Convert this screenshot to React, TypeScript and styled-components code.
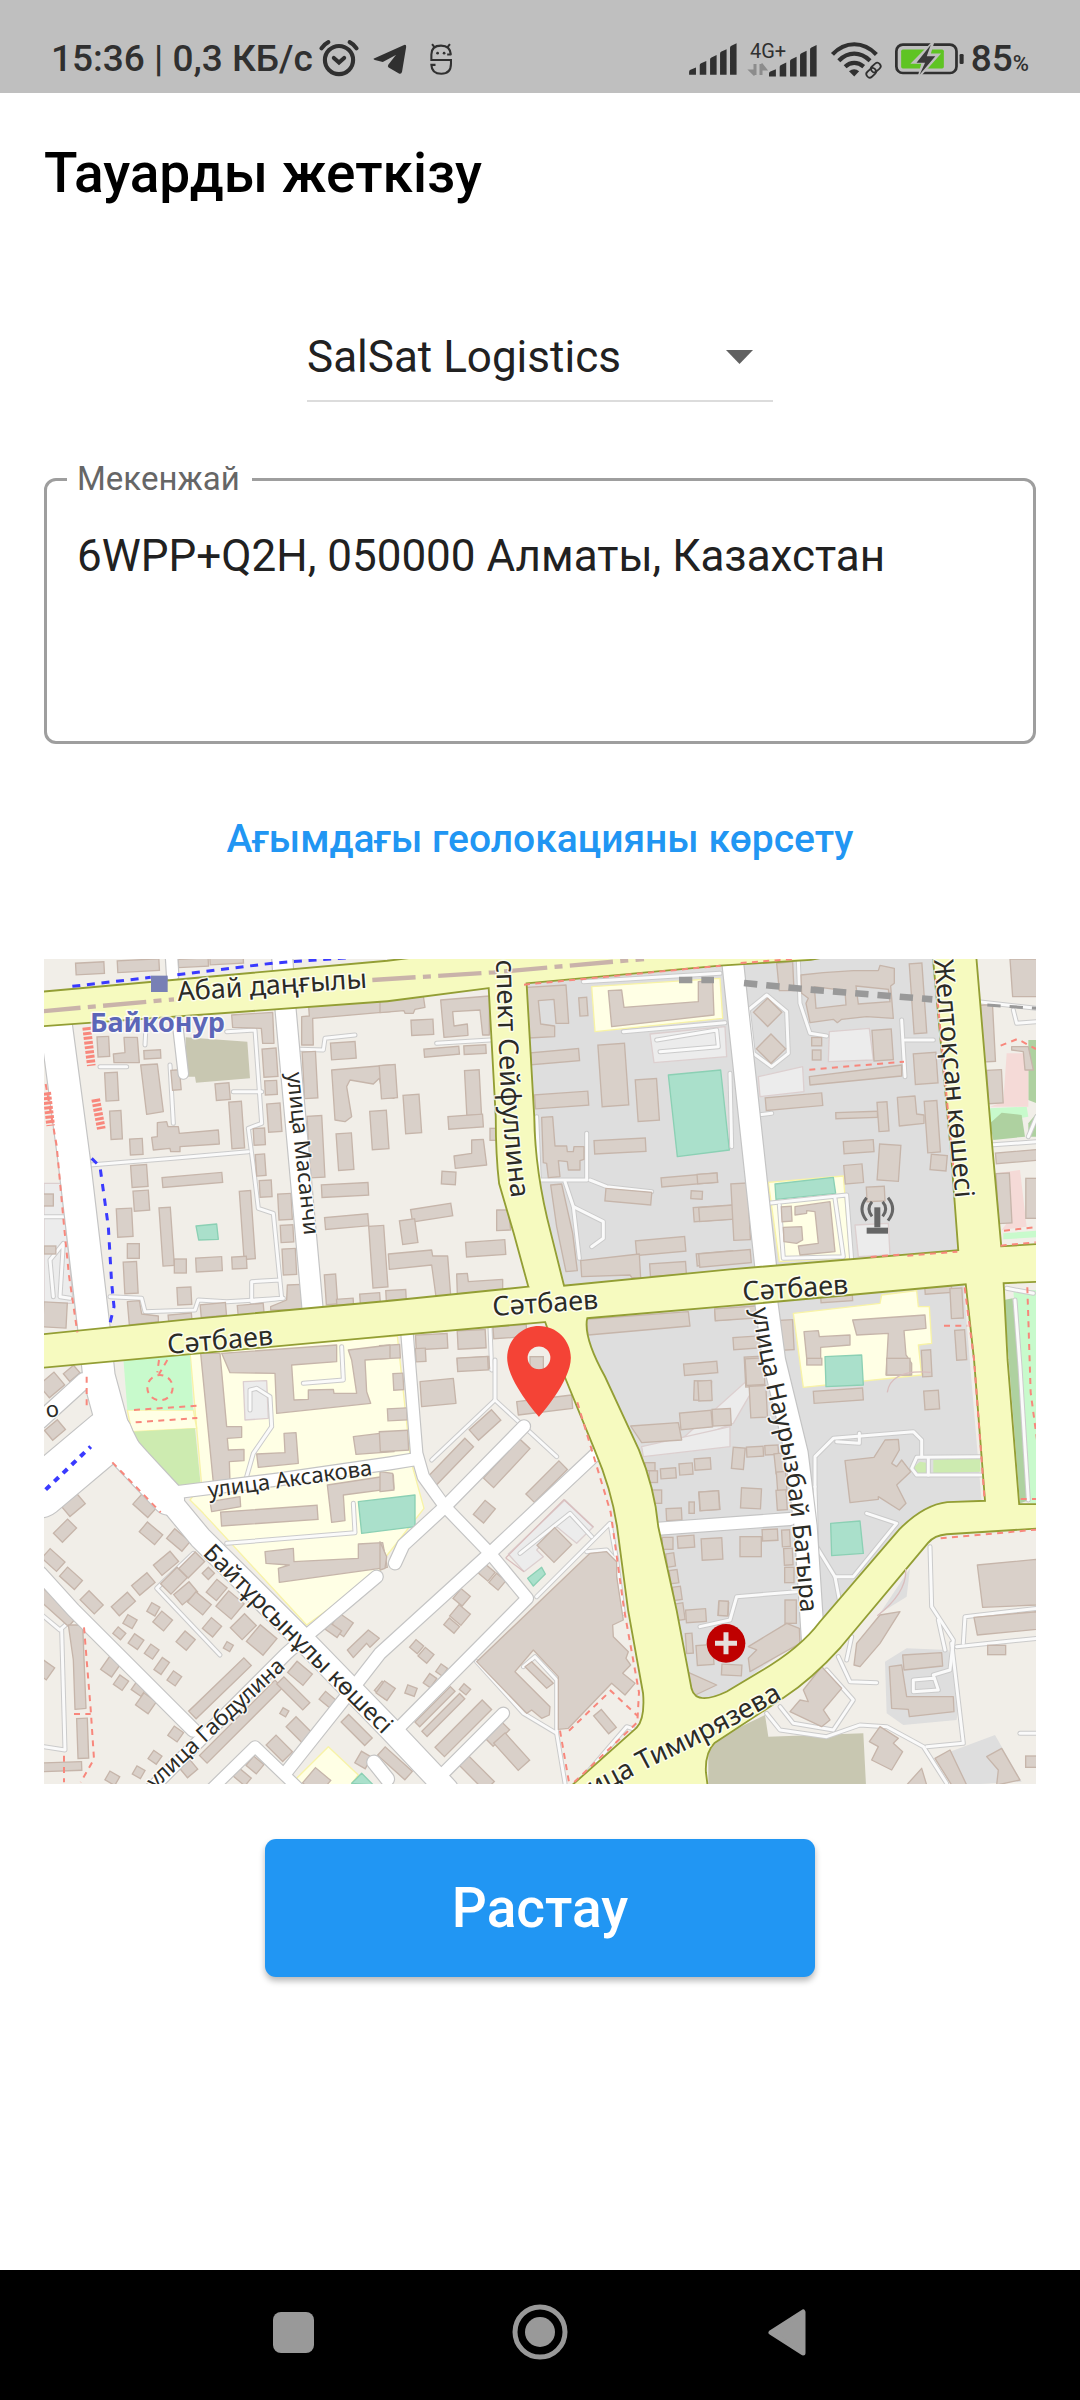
import React from "react";
import styled, { createGlobalStyle } from "styled-components";

const GlobalStyle = createGlobalStyle`
  *, *::before, *::after { box-sizing: border-box; }
  body { margin: 0; background: #fff; font-family: Roboto, "Noto Sans", sans-serif; color: #212121; }
  button, select, textarea { font: inherit; color: inherit; }
`;

const Screen = styled.div`
  display: flex;
  flex-direction: column;
  min-height: 100vh;
`;

const StatusBar = styled.header`
  display: flex;
  justify-content: space-between;
  height: 93px;
  padding: 24px 51px 0;
  background: #bfbfbf;
  color: #303030;
`;

const StatusGroup = styled.div<{ $gap: number }>`
  display: flex;
  align-items: center;
  gap: ${(p) => p.$gap}px;
  svg { display: block; flex: none; overflow: visible; }
`;

const StatusText = styled.span`
  font-size: 37px;
  line-height: 44px;
  font-weight: 500;
  white-space: pre;
`;

const Percent = styled.small`
  font-size: 22px;
  line-height: 22px;
  font-weight: 500;
`;

const Page = styled.main`
  flex: 1;
  display: flex;
  flex-direction: column;
  align-items: center;
  padding: 48px 44px 0;
`;

const Title = styled.h1`
  align-self: stretch;
  margin: 0 0 108px;
  font-size: 55px;
  line-height: 64px;
  font-weight: 500;
  color: #000;
`;

const SelectBox = styled.div`
  display: flex;
  align-items: center;
  width: 466px;
  max-width: 100%;
  height: 89px;
  margin-bottom: 57px;
  padding-right: 20px;
  border-bottom: 2px solid #dcdcdc;
  svg { flex: none; pointer-events: none; }
`;

const Select = styled.select`
  flex: 1;
  height: 87px;
  padding: 0;
  border: 0;
  background: none;
  appearance: none;
  font-size: 44px;
`;

const Field = styled.fieldset`
  align-self: stretch;
  min-width: 0;
  margin: 0 0 47px;
  padding: 31px 30px 55px;
  border: 3px solid #9e9e9e;
  border-radius: 12px;
`;

const Legend = styled.legend`
  margin-left: -10px;
  padding: 0 12px 0 10px;
  font-size: 33px;
  line-height: 40px;
  color: #666;
`;

const Address = styled.textarea`
  display: block;
  width: 100%;
  padding: 0;
  border: 0;
  outline: 0;
  resize: none;
  background: none;
  font-size: 44px;
  line-height: 52px;
`;

const TextButton = styled.button`
  height: 96px;
  margin-bottom: 72px;
  padding: 0 22px;
  border: 0;
  background: none;
  color: #2196f3;
  font-size: 39px;
  font-weight: 500;
`;

const MapFrame = styled.svg`
  display: block;
  width: 100%;
  height: auto;
  margin-bottom: 55px;
`;

const Confirm = styled.button`
  width: 550px;
  max-width: 100%;
  height: 138px;
  border: 0;
  border-radius: 11px;
  background: #2196f3;
  color: #fff;
  font-size: 55px;
  font-weight: 500;
  box-shadow: 0 4px 6px rgba(0, 0, 0, 0.28);
`;

const NavBar = styled.nav`
  display: flex;
  justify-content: space-around;
  align-items: center;
  height: 130px;
  padding: 0 170px 6px;
  background: #000;
`;

const NavButton = styled.button`
  display: grid;
  place-items: center;
  width: 96px;
  height: 96px;
  padding: 0;
  border: 0;
  background: none;
`;

const Label = styled.text<{ $size: number }>`
  font-family: "Noto Sans", "Open Sans", sans-serif;
  font-size: ${(p) => p.$size}px;
  fill: #2b2b26;
  stroke: rgba(255, 255, 255, 0.75);
  stroke-width: 3px;
  stroke-linejoin: round;
  paint-order: stroke;
`;

const StationLabel = styled(Label)`
  font-weight: 700;
  fill: #5c66b8;
`;

/* ---------- status icons ---------- */

const Bars = () => (
  <path
    fill="#303030"
    d="M0 91v-8q0-4 4-6l16-7v21zM31 91V64q0-4 4-6l15-7v40zM61 91V47q0-4 4-6l15-7v57zM90 91V30q0-4 4-6l15-7v74zM119 91V13q0-4 4-6l15-7v91z"
  />
);

const AlarmIcon = () => (
  <svg width="44" height="40" viewBox="913 114 128 116" fill="none" stroke="#303030" strokeWidth="12" strokeLinecap="round" aria-hidden="true">
    <circle cx="977" cy="175" r="41" />
    <path d="M962 169l15 13 15-13" />
    <path d="M926 141q8-12 20-18M1028 141q-8-12-20-18" />
  </svg>
);

const PlaneIcon = () => (
  <svg width="44" height="40" viewBox="1063 116 128 116" fill="#303030" aria-hidden="true">
    <path d="M1082 172l86-39q7-2 6 6l-12 72q-2 8-9 5l-30-17q-4-4-1-8l22-29-38 21-23-6q-7-3-1-5z" />
  </svg>
);

const FaceIcon = () => (
  <svg width="44" height="40" viewBox="1208 112 128 116" fill="none" stroke="#303030" strokeWidth="6" aria-hidden="true">
    <path d="M1302 157h-12M1301 158q-2-27-29-27-28 0-28 26v16h57v11q0 29-28 29t-29-26h12M1246 127l8 10M1298 127l-8 10" />
    <g fill="#303030" stroke="none"><circle cx="1262" cy="153" r="4" /><circle cx="1281" cy="153" r="4" /></g>
  </svg>
);

const SignalIcon = () => (
  <svg width="48" height="32" viewBox="0 -1 139 93" aria-hidden="true"><Bars /></svg>
);

const MobileIcon = () => (
  <svg width="67" height="40" viewBox="0 -4 67 40" role="img" aria-label="4G+">
    <text x="0" y="15" fontSize="20" fill="#303030" fontFamily="Roboto, sans-serif">4G+</text>
    <path d="M5 21v11M5 32l-4-4h4M11 32V21M11 21l4 5h-4" stroke="#8c8c8c" strokeWidth="3" fill="none" />
    <g transform="translate(19 2) scale(.345)"><Bars /></g>
  </svg>
);

const WifiIcon = () => (
  <svg width="52" height="38" viewBox="842 117 148 108" fill="none" stroke="#303030" strokeWidth="12" aria-hidden="true">
    <path d="M849 158q27-29 62-29t63 29M867 176q20-20 44-20t45 20M885 193q12-11 26-11t27 11" />
    <path d="M896 206q15-11 29 0l-14 15z" fill="#303030" stroke="none" />
    <g strokeWidth="5">
      <rect x="957" y="186" width="30" height="19" rx="9" transform="rotate(-42 972 195)" />
      <rect x="944" y="201" width="30" height="19" rx="9" transform="rotate(-42 959 210)" />
    </g>
  </svg>
);

const BatteryIcon = () => (
  <svg width="69" height="32" viewBox="1033 125 202 92" aria-hidden="true">
    <rect x="1037" y="129" width="176" height="83" rx="19" fill="none" stroke="#303030" strokeWidth="8" />
    <rect x="1222" y="156" width="12" height="30" rx="4" fill="#303030" />
    <rect x="1051" y="143" width="125" height="56" rx="5" fill="#5fc423" />
    <path d="M1140 122l-62 63h32l-10 35h10l58-65h-30l10-33z" fill="#bfbfbf" />
    <path d="M1138 129l-42 53h25l-16 35 46-54h-25z" fill="#3a3a3a" />
  </svg>
);

/* ---------- map ---------- */

type Sheet = {
  at: [number, number];
  grey?: string[];
  light?: string[];
  yellow?: string[];
  mint?: string[];
  park?: string[];
  wood?: string[];
  pink?: string[];
  olive?: string[];
  paths: string[];
  blocks: string;
  shapes: string[];
  teal?: string[];
};

/* Six survey sheets; each keeps its own origin. Blocks are "cx,cy,w,h,angle". */
const sheets: Sheet[] = [
  {
    at: [-12, -27],
    light: ["12,700 65,700 85,900 100,1060 12,1060"],
    olive: ["437,262 622,275 630,385 468,398 465,380 437,380"],
    teal: ["468,828 530,822 535,868 476,870"],
    paths: [
      "180,350 260,350", "390,345 400,520", "580,425 665,425", "780,298 850,300 855,265 945,255", "150,645 400,625 625,605",
      "560,245 645,240 665,520 625,535 640,650 655,775 700,790 725,1045 635,1055 635,995 720,990",
      "210,1040 305,1045 315,1085 465,1080 475,1050 560,1055 730,1045", "40,1040 30,930 70,880 60,1040 90,1045", "320,190 315,285", "12,800 80,800",
    ],
    blocks:
      "150,55,85,35,-3;295,47,125,35,-3;460,38,90,25,-3;560,32,100,20,-3;190,290,35,60,-3;337,313,50,25,-3;215,410,38,85,-3;408,390,26,60,-5;228,525,34,85,-3;289,590,38,48,-3;548,425,42,50,-5;590,525,38,140,-4;690,338,42,85,-4;693,413,36,42,-3;703,503,40,85,-4;658,560,34,50,-3;662,645,28,65,-4;677,716,36,50,-3;298,678,48,66,-4;304,752,46,60,-4;457,690,180,30,-5;380,860,34,175,-4;622,825,34,205,-4;254,818,46,85,-3;280,903,36,44,0;272,983,40,95,-3;421,948,36,42,0;507,943,78,42,-3;598,938,44,36,-3;735,770,40,78,-3;741,851,38,52,-3;748,935,40,78,-3;433,1038,42,52,-3;420,1102,70,20,-5;520,1080,76,38,-5;632,1078,78,30,-5;810,375,40,140,-3;828,590,44,185,-3;910,302,74,50,-4;915,605,46,110,-4;1018,540,50,115,-4;915,720,140,38,-3;920,815,130,36,-5;1015,920,45,185,-4;873,1018,34,90,-4;915,1055,50,18,-4;990,1045,60,30,-4;25,750,30,36,0;30,900,35,24,0;45,1095,70,75,3",
    shapes: [
      "252,262 292,262 298,338 222,338 220,312 255,308", "302,345 352,342 370,485 320,493",
      "335,562 352,560 352,518 380,515 384,530 415,530 418,550 535,540 538,582 420,590 420,605 392,605 390,595 340,600",
      "575,195 698,187 702,280 668,280 664,235 578,232", "262,1055 298,1052 305,1092 355,1098 355,1115 268,1125",
      "742,1005 785,1003 788,1078 692,1080 692,1070 740,1050", "785,200 808,198 806,170 1050,150 1050,185 818,205 820,285 785,285",
      "875,360 1050,345 1062,445 1030,440 1018,385 1000,402 930,390 920,410 935,500 915,515 885,510",
    ],
  },
  {
    at: [1008, -27],
    light: ["810,252 1035,230 1040,320 822,338"],
    yellow: ["635,110 1020,85 1028,205 645,245"],
    teal: ["865,375 1022,360 1048,600 892,620"],
    paths: [
      "170,280 330,270", "610,95 1020,70", "470,500 478,690 620,690 620,550", "555,695 580,770 670,815 670,865 635,890", "580,770 598,925",
      "630,690 680,710 815,725", "830,270 1010,240 1015,290 840,305", "730,245 1035,218", "330,1130 335,1260",
    ],
    blocks:
      "127,232,66,46,-3;185,305,105,24,-5;285,299,66,26,-3;25,395,48,100,-4;97,492,48,115,-4;279,428,44,135,-3;257,515,104,38,-4;340,553,20,36,0;206,684,42,38,3;155,788,122,38,-9;86,845,46,72,-8;317,895,118,44,-4;48,1035,60,30,-3;610,170,24,55,-4;525,320,145,36,-5;545,450,160,42,-4;700,375,80,185,-4;802,450,64,125,-4;720,588,154,40,-3;928,690,168,28,-5;950,735,34,24,3;745,740,138,38,5;1000,790,118,42,-4;842,888,148,44,-5;864,957,108,38,-4;1005,925,110,36,-5;1030,1095,50,30,-4;155,1175,95,44,-3;122,1215,30,40,-3;30,1205,60,40,-3;275,1168,84,55,-3;280,1240,95,35,-4;390,1145,100,36,-4;470,1240,40,40,0",
    shapes: [
      "0,145 130,138 135,172 105,178 100,190 75,190 72,182 0,188", "182,150 328,138 328,255 308,255 300,180 218,185 222,228 262,222 264,256 192,262",
      "222,618 275,610 275,570 310,568 320,645 226,655", "350,780 385,780 392,840 350,842",
      "25,912 155,900 158,918 203,918 212,1035 168,1040 155,945 28,958", "230,972 262,970 265,995 368,988 368,1020 232,1032",
      "440,112 558,105 566,220 528,220 522,148 475,152 482,222 524,228 524,260 445,264",
      "685,122 725,120 732,172 955,155 955,95 998,90 1002,195 695,230",
      "485,502 518,500 525,588 560,588 562,605 580,605 582,590 612,590 612,628 600,632 600,660 565,660 562,635 535,632 540,680 505,683 500,640 490,638",
      "512,705 545,702 578,850 592,962 558,965 530,830", "602,932 778,912 782,985 755,982 750,975 605,980", "618,1108 925,1085 930,1128 625,1155",
    ],
  },
  {
    at: [1968, -27],
    light: ["388,245 508,235 520,330 385,335", "175,380 308,350 312,425 180,440", "465,825 565,820 570,915 475,920", "210,1230 100,1420 -80,1490"],
    yellow: ["205,697 430,678 450,925 238,935", "280,1090 540,1060 545,1035 650,1022 655,1070 688,1070 695,1180 655,1185 665,1275 310,1312"],
    mint: ["868,475 980,470 985,500 870,520", "910,850 1010,842 1010,862 910,868", "940,1020 1010,1020 1010,1660 990,1660"],
    wood: ["870,520 905,488 965,495 975,560 880,570", "985,270 1010,270 1010,460 985,450", "985,520 1010,490 1010,560 985,560", "912,1050 938,1045 975,1400 990,1650 960,1660"],
    pink: ["920,310 985,310 985,470 870,470 910,455", "890,670 960,660 980,830 905,840 935,800"],
    teal: ["225,702 400,682 407,730 228,748", "375,1220 485,1215 490,1305 378,1310"],
    paths: [
      "295,30 300,160 330,250 380,258", "605,210 615,380", "615,270 700,270", "145,180 200,135 260,185 265,310 215,350 160,310 145,180", "170,495 215,490",
      "205,760 440,735 455,930", "238,765 250,925 430,920 405,745", "835,155 1010,175", "870,585 1010,575", "90,370 95,590", "920,1015 1000,1030",
      "945,1050 960,1250 985,1650", "940,180 950,220 1010,215", "985,560 1010,500",
    ],
    blocks:
      "654,145,38,210,-4;548,285,58,92,-4;677,355,68,92,-4;203,187,60,60,45;213,296,62,62,45;350,275,30,25,0;350,315,26,30,0;282,455,170,38,-5;470,495,125,18,-2;549,500,30,88,-4;697,530,38,155,-4;716,638,48,46,5;476,590,90,36,-4;567,638,64,108,4;461,672,55,56,-5;527,732,54,44,-3;260,792,30,45,-3;22,685,60,28,-4;50,790,105,42,-4;122,785,50,170,-3;75,925,155,40,-5;862,250,40,170,-3;885,410,44,100,-3;950,620,125,32,-5;912,745,40,150,-3;995,745,35,120,0;110,1090,130,36,-4;145,1178,90,36,-4;260,1155,40,90,-3;410,1045,95,20,-4;715,1020,80,20,-4;770,1060,36,90,-3;782,1185,30,90,-4;680,1240,28,80,-3;160,1265,50,90,-3",
    shapes: [
      "230,40 278,35 282,122 238,122", "328,380 605,345 605,378 330,405",
      "303,75 370,68 460,62 535,62 540,46 583,55 583,100 572,108 580,205 500,200 425,208 412,218 400,208 330,218 318,160 325,145 305,130",
      "592,442 645,438 650,492 672,495 672,520 598,528", "285,770 390,755 405,905 300,915 295,888 355,880 345,785 320,782 320,790 285,795",
      "250,832 305,830 308,870 290,880 252,875", "930,27 1010,27 1010,140 938,140", "935,290 985,290 1000,360 975,360 970,305 935,300",
      "458,1110 675,1095 678,1135 612,1142 618,1215 635,1240 635,1275 558,1275 565,1150 470,1155",
      "312,1145 355,1142 358,1160 450,1155 450,1185 362,1192 362,1240 322,1243",
    ],
  },
  {
    at: [-12, 1203],
    light: ["610,65 680,62 685,175 615,180"],
    yellow: [
      "450,-25 1072,-72 1112,300 1152,445 1030,600 1020,635 800,795 490,460 450,420 485,375", "262,150 460,150 470,205 275,215",
      "865,1160 955,1245 920,1290 780,1290 770,1255",
    ],
    mint: ["250,-5 450,-15 460,150 262,150"],
    park: ["275,215 465,205 482,375 385,385 275,240"],
    teal: ["955,425 1125,405 1125,500 965,520", "935,1270 965,1240 1000,1275"],
    paths: [
      "790,70 910,60 905,-40", "620,350 640,280 695,200 690,110 650,85 630,90 630,150", "560,550 945,518 940,430", "460,580 350,685 540,885",
      "0,760 60,810 105,770", "65,810 75,1170 12,1160",
    ],
    blocks:
      "688,467,290,42,-4;100,435,60,40,-40;75,512,60,38,-45;315,437,60,42,42;333,520,60,38,40;415,540,60,38,40;40,600,60,38,42;93,655,60,36,42;155,727,60,38,45;378,610,65,40,-40;310,672,60,38,-40;250,732,65,36,-42;402,662,70,44,-45;455,615,70,40,-45;505,640,26,26,45;437,700,60,40,-40;478,730,60,40,40;530,690,40,50,40;570,735,60,60,40;340,748,28,30,30;368,783,42,42,40;516,802,40,42,40;437,842,40,42,40;565,860,22,22,30;610,800,60,50,-45;665,840,65,65,40;270,785,32,30,30;288,845,34,34,35;238,820,30,25,40;335,875,30,34,35;365,918,26,44,35;403,955,30,34,35;212,920,40,48,35;243,968,32,34,35;298,985,36,34,35;318,1030,46,44,35;540,985,230,32,-44;603,1085,320,32,-45;760,1000,110,30,45;780,940,60,44,40;870,1025,60,30,40;733,1057,20,20,30;778,1110,70,42,45;718,1165,70,42,45;407,1122,34,34,35;345,1192,30,30,35;296,1237,28,28,30;217,1255,34,30,30;445,1225,40,40,-40;950,1110,100,32,45;970,1200,36,40,30;1030,990,40,36,40;905,795,50,50,35;880,810,44,24,35;35,75,60,50,-40;95,40,40,30,-40;45,210,50,38,-40;45,740,140,34,42;128,1135,32,120,-2;60,1220,130,26,-2;15,930,40,44,35;830,1265,60,60,40;645,1215,40,36,40;605,1250,50,30,40",
    shapes: [
      "482,-20 540,-20 560,200 605,200 605,232 562,235 565,270 612,268 612,302 568,305 570,365 520,368",
      "545,-20 890,-45 890,5 755,15 762,120 805,118 805,90 880,88 882,100 950,100 935,0 925,-30 1050,-45 1050,-5 975,0 980,95 992,130 710,160 705,40 570,38",
      "650,282 735,278 732,220 768,218 775,310 655,322", "940,230 1062,215 1062,275 948,283",
      "862,375 1060,345 1062,385 910,405 915,482 875,487", "510,425 600,410 602,440 515,455",
      "675,575 760,565 762,605 955,595 955,552 1028,548 1042,622 718,667 715,625 748,615 678,610",
      "85,795 128,795 138,1045 105,1048 100,900", "985,810 1018,835 990,862 980,850 940,893 922,870",
    ],
  },
  {
    at: [1008, 1203],
    light: ["555,420 640,500 590,550 530,500 470,570 490,590 432,635 385,582", "785,260 1050,200 1050,260 790,290"],
    teal: ["443,655 485,622 496,642 460,678"],
    paths: [
      "345,0 345,120 155,300", "345,120 530,290", "420,580 570,460 635,530", "470,710 690,490 710,600 730,760", "620,575 680,570 710,605",
      "290,905 430,1060 530,1120 555,1270", "430,920 465,890 530,960 530,1120", "620,1240 740,1100 770,1110",
    ],
    blocks:
      "278,12,92,40,-3;55,65,30,50,-3;52,163,58,36,-3;42,243,85,60,-3;315,195,90,42,-42;212,305,160,36,-46;380,310,160,42,-47;500,365,140,36,-45;313,455,55,40,-50;523,555,75,72,-45;320,638,38,34,40;352,665,36,36,40;245,712,36,38,40;240,765,44,44,40;215,797,40,26,40;110,860,30,30,40;138,886,34,34,40;185,930,24,28,35;150,962,26,34,35;93,992,30,26,20;17,992,40,44,35;255,988,26,22,40;165,1040,150,20,-45;190,1065,160,22,-45;250,1105,200,40,-45;350,1120,70,40,-45;395,1175,110,46,48;290,1240,110,40,45;45,1210,110,34,42;675,1085,70,30,50;962,25,100,34,-5;968,92,52,58,2;948,180,95,50,-5;1025,172,55,50,-3;810,320,30,24,0;820,350,25,35,0;865,340,46,30,-4;918,327,40,34,-4;968,312,48,34,-4;830,410,30,40,0;882,463,46,36,-3;935,443,16,34,0;988,422,60,56,-4;863,550,32,36,0;918,545,50,36,-4;996,567,62,64,-3;872,600,24,40,-8;882,650,24,40,-8;892,700,24,40,-8;900,755,24,50,-8;948,767,60,38,-4;1030,747,30,40,3;928,850,20,60,-4;975,885,50,60,-4",
    shapes: [
      "120,65 220,55 228,130 125,140", "0,335 38,340 42,390 0,395", "410,125 575,105 578,145 415,165",
      "290,905 630,580 680,575 710,605 710,650 730,780 698,795 700,830 745,875 738,895 752,915 728,940 765,970 735,1005 695,970 565,1105 535,1108 535,950 460,870 405,935 510,1040 508,1065 485,1075 455,1050 440,1060",
      "435,920 455,905 520,970 500,985", "752,198 895,188 905,240 785,248", "920,935 1010,975 940,1008", "0,545 20,590 15,625 0,630",
    ],
  },
  {
    at: [1968, 1203],
    grey: ["555,905 620,865 745,870 780,1000 770,1080 610,1095 560,1060", "710,1190 885,1125 965,1265 790,1275", "630,625 620,710 540,760"],
    park: ["700,300 840,290 842,335 700,340", "640,322 660,305 680,308 680,338 655,342"],
    olive: ["25,1175 60,1130 195,1065 205,1130 490,1120 498,1275 25,1275"],
    teal: ["392,490 480,483 490,580 395,587"],
    paths: [
      "345,380 345,290 400,235 640,215 665,240 665,290", "345,380 350,560 405,650 460,650 590,490 500,460", "405,650 420,730",
      "840,290 650,292 635,325 650,345 850,345", "685,295 685,345", "690,560 695,740 760,840 750,930 700,945 715,990 640,995 640,960 700,955",
      "715,780 735,870", "755,850 790,1150 680,1160", "740,1270 670,1160 560,1100 480,1095 380,1130 240,1110 200,1060", "240,1040 280,1090 400,1110 460,1020 380,930",
      "415,890 450,965 530,968", "455,830 440,900", "790,850 795,770 1010,745", "770,860 1010,835", "0,800 90,780 110,710 290,695", "960,1120 1010,1120", "478,220 478,250 410,245",
    ],
    blocks:
      "15,92,40,60,-3;175,125,50,95,-3;165,35,55,80,-3;415,107,148,36,-4;695,120,44,56,-4;595,20,70,50,0;343,5,45,20,0;115,295,36,64,5;165,275,50,30,-3;215,270,40,28,-3;240,310,30,60,-6;245,365,28,60,-4;245,420,30,60,-4;153,415,60,60,3;28,422,58,56,-4;152,560,64,60,0;210,525,46,34,-3;258,535,24,50,-3;265,590,26,50,-3;268,645,28,46,0;70,745,28,44,3;272,755,34,70,0;95,930,60,32,3;890,870,54,28,0;995,1205,36,34,0",
    shapes: [
      "145,860 260,790 298,805 300,850 150,935 145,895 170,870",
      "435,302 522,292 555,240 595,238 598,270 575,310 590,320 605,300 632,335 590,375 618,430 598,450 535,410 535,418 450,428",
      "832,615 1010,598 1010,735 848,742", "822,772 1010,755 1010,808 832,825",
      "568,920 605,915 620,1010 760,1010 762,1055 628,1070 625,1048 575,1045", "608,885 725,878 728,918 612,930",
      "462,915 470,850 540,765 600,755 540,850 480,920", "365,920 425,985 370,1050 390,1080 365,1100 270,1055 300,1020 325,1025 310,990",
      "540,1100 595,1135 580,1150 608,1175 575,1230 515,1200 535,1160 508,1145", "705,1195 750,1170 800,1275 755,1275",
      "860,1190 905,1165 960,1260 890,1275 895,1230", "620,1275 665,1225 680,1275",
    ],
  },
];

const Polys = ({ items = [], fill, stroke }: { items?: string[]; fill: string; stroke?: string }) => (
  <g fill={fill} stroke={stroke} strokeWidth={stroke ? 4 : 0} strokeLinejoin="round">
    {items.map((p) => <polygon key={p} points={p} />)}
  </g>
);

const SheetGround = ({ sheet: s }: { sheet: Sheet }) => (
  <g transform={`translate(${s.at.join(" ")})`}>
    <Polys items={s.grey} fill="#dedede" />
    <Polys items={s.yellow} fill="#ffffe5" stroke="#f8f3a6" />
    <Polys items={s.light} fill="#ececec" stroke="#dccfcf" />
    <Polys items={s.mint} fill="#c8facc" />
    <Polys items={s.park} fill="#cdebb0" />
    <Polys items={s.wood} fill="#aed1a0" />
    <Polys items={s.pink} fill="#f5dad7" />
    <Polys items={s.olive} fill="#c8c7b1" />
    <Polys items={s.teal} fill="#aae0cb" stroke="#8bd0b4" />
  </g>
);

const SheetBuildings = ({ sheet: s }: { sheet: Sheet }) => (
  <g transform={`translate(${s.at.join(" ")})`}>
    <g fill="#d9d0c9" stroke="#c6b5aa" strokeWidth="4">
      {s.blocks.split(";").map((b) => {
        const [x, y, w, h, a] = b.split(",").map(Number);
        return <rect key={b} x={x - w / 2} y={y - h / 2} width={w} height={h} transform={`rotate(${a} ${x} ${y})`} />;
      })}
    </g>
    <Polys items={s.shapes} fill="#d9d0c9" stroke="#c6b5aa" />
  </g>
);

const SheetPaths = ({ sheet: s }: { sheet: Sheet }) => (
  <g transform={`translate(${s.at.join(" ")})`} fill="none" strokeLinejoin="round" strokeLinecap="round">
    {s.paths.map((p) => <polyline key={p} points={p} stroke="#cbcbcb" strokeWidth="15" />)}
    {s.paths.map((p) => <polyline key={p + "w"} points={p} stroke="#fafafa" strokeWidth="9" />)}
  </g>
);

const streets: [string, number][] = [
  ["30,150 50,300 90,600 150,1110 165,1253 205,1400 250,1490 373,1620", 94],
  ["373,1620 468,1735 788,2053 1038,2310 1208,2490", 66],
  ["373,1610 280,1510 200,1420", 84],
  ["120,1265 -12,1385", 46],
  ["190,1430 -12,1600", 150],
  ["-12,1843 88,1953 448,2313", 40],
  ["318,2493 728,2083 788,2030 998,1853", 36],
  ["1053,1813 1078,1758 1203,1643 1440,1402", 36],
  ["1658,1483 1338,1783 1008,2083 938,2173 730,2435", 36],
  ["500,2493 633,2363 760,2485", 32],
  ["1088,1110 1118,1483 1138,1553 1203,1643 1338,1783 1450,1918 1068,2303", 34],
  ["1378,2263 1198,2443", 34],
  ["378,1602 700,1562 1038,1513 1118,1500", 36],
  ["1820,1711 2238,1680", 36],
  ["715,0 723,133 806,1053", 60],
  ["383,0 386,50", 34],
  ["400,190 418,345", 28],
  ["2065,0 2168,950", 62],
  ["2163,1000 2190,1203 2258,1483 2285,1703 2308,2060", 66],
  ["990,2410 1030,2460", 40],
];

const highways = [
  "M-20 102L1030 8 1500 -50H2560L2300 0 2028 17 1430 72 1030 124 -20 200Z",
  "M-20 1130L440 1083 1038 1028 1460 985 1558 983 2058 934 2745 876 2870 865 2996 857V965L2876 970 2768 973 2058 1038 1628 1075 1510 1086 1038 1128 -20 1225Z",
  "M1330 -20L1336 73 1358 473Q1358 590 1368 673L1412 823 1455 980 1505 1085 1565 1253 1655 1473Q1705 1590 1722 1703L1755 1953 1800 2203Q1806 2280 1780 2308L1570 2495H1990L1983 2440Q1980 2380 2010 2350L2218 2213Q2300 2160 2388 2063L2650 1750Q2670 1726 2708 1723L2996 1705V1638H2923L2888 1203 2876 970 2870 873 2843 573 2793 -20H2668L2723 573 2746 880 2768 975 2793 1203 2826 1628 2710 1632Q2640 1640 2568 1713L2330 1990Q2270 2070 2150 2140L2050 2200Q1955 2245 1940 2190L1895 1953 1840 1703Q1830 1590 1782 1473L1680 1253Q1612 1130 1628 1073L1558 983 1518 823Q1470 640 1468 473L1445 73 1440 -20Z",
];

const CityMap = () => (
  <MapFrame viewBox="0 0 992 825" role="img" aria-label="Алматы">
    <rect width="992" height="825" fill="#f1eee8" />
    <g transform="scale(.33333)">
      <path d="M1430 75L2033 0H2668L2745 875 1560 985 1470 650ZM1628 1073L2758 973 2813 1628 2668 1643 2338 1993 2028 2218H1948L1828 1643 1618 1123Z" fill="#dedede" />
      {sheets.map((s) => <SheetGround key={s.at.join()} sheet={s} />)}
      {sheets.map((s) => <SheetPaths key={s.at.join()} sheet={s} />)}
      {sheets.map((s) => <SheetBuildings key={s.at.join()} sheet={s} />)}

      <g fill="#dedede" stroke="#c6b5aa" strokeWidth="4">
        <path d="M2311 83l92 12 3 43-90 10zM2436 81l97 10 5 37-95 7z" />
      </g>

      <g fill="none" strokeLinejoin="round" strokeLinecap="round">
        {streets.map(([p, w]) => <polyline key={p} points={p} stroke="#c4c4c4" strokeWidth={w + 7} />)}
        {streets.map(([p, w]) => <polyline key={p + "w"} points={p} stroke="#fff" strokeWidth={w} />)}
      </g>

      {highways.map((d) => <path key={d} d={d} fill="none" stroke="#939e34" strokeWidth="11" />)}
      {highways.map((d) => <path key={d + "f"} d={d} fill="#f6fabf" />)}

      <g fill="none" strokeWidth="13" stroke="#c9b3aa" strokeDasharray="130 22 24 22">
        <path d="M-20 158L390 121M985 63L1350 40 1800 0" />
      </g>
      <g fill="none" stroke="#999" strokeWidth="20" strokeDasharray="40 27">
        <path d="M1905 63H2010M2100 72L2300 92 2665 121" />
        <path d="M2830 138L2976 148" strokeWidth="9" />
      </g>
      <g fill="none" stroke="#3a3aff" strokeWidth="9" strokeDasharray="24 20">
        <path d="M85 82L320 55M400 47L690 12 920 -4" />
        <path d="M143 598L168 623 193 803 203 973 210 1043 198 1093" strokeDasharray="22 22" />
        <path d="M5 1592L140 1463" strokeWidth="12" strokeDasharray="18 18" />
      </g>
      <g fill="none" stroke="#f8877c" strokeWidth="6" strokeDasharray="18 16">
        <path d="M5 375L38 560 60 800 75 950 100 1120M128 1253V1350M205 1510L350 1660" />
        <path d="M1440 77L2030 20M2090 12L2250 0M2296 332L2580 308M2590 890L2740 878M2480 894L2580 886" />
        <path d="M2675 60L2700 330 2735 700M2762 985L2790 1200 2822 1625M2690 1738L2976 1712" />
        <path d="M1600 1330L1700 1660 1740 1950 1785 2200 1780 2290 1590 2470M1575 2315L1700 2195 1780 2270M1548 2315L1575 2470" />
        <path d="M120 2005L140 2250 150 2400 110 2470M90 2265H140M60 2390V2470" />
        <path d="M345 1203L340 1240M370 1203L345 1245" />
        <circle cx="348" cy="1286" r="38" />
        <path d="M270 1353L460 1340M275 1390L460 1377M2870 860L2975 850M2880 815L2970 805M2870 260L2920 240 2976 270M2950 985L2960 1300 2980 1450M2930 1620H2976M2700 1100H2770" />
      </g>
      <g fill="none" stroke="#f8877c" strokeWidth="26" strokeDasharray="9 5">
        <path d="M128 205L142 320M155 420L172 510" />
        <path d="M8 400L20 500" />
      </g>
      <path d="M1385 1797L1560 1622 1648 1705M1385 1797L1440 1838M2530 1300Q2540 1230 2660 1240M2585 1830Q2590 1900 2500 1970" fill="none" stroke="#d9bdbd" strokeWidth="4" />
      <rect x="321" y="50" width="50" height="49" fill="#7880b5" />

      <g fill="none" stroke="#666" strokeWidth="9">
        <path d="M2500 745V805" strokeWidth="18" />
        <path d="M2468 815H2532" strokeWidth="18" />
        <path d="M2484 728Q2466 749 2484 772M2516 728Q2534 749 2516 772M2468 716Q2440 749 2468 785M2532 716Q2560 749 2532 785" />
      </g>
      <circle cx="2046" cy="2053" r="58" fill="#bf0000" />
      <path d="M2046 2020V2086M2013 2053H2079" stroke="#e6dedb" strokeWidth="15" />
    </g>

    <defs>
      <path id="seifullin" d="M452 1L455 90Q457 170 474 290" />
      <path id="zheltoksan" d="M890 1L916 290" />
      <path id="nauryzbai" d="M708 350Q716 405 735 480Q750 550 760 700" />
      <path id="timiryazev" d="M549 838L606 808Q680 775 780 715" />
    </defs>
    <Label $size={27} transform="translate(134 42) rotate(-4)">Абай даңғылы</Label>
    <StationLabel $size={27} x="46" y="73">Байконур</StationLabel>
    <Label $size={27} transform="translate(124 395) rotate(-5)">Сәтбаев</Label>
    <Label $size={27} transform="translate(449 357) rotate(-4)">Сәтбаев</Label>
    <Label $size={27} transform="translate(699 342) rotate(-4)">Сәтбаев</Label>
    <Label $size={22} transform="translate(243 114) rotate(84)">улица Масанчи</Label>
    <Label $size={27}><textPath href="#seifullin">спект Сейфуллина</textPath></Label>
    <Label $size={27}><textPath href="#zheltoksan">Желтоқсан көшесі</textPath></Label>
    <Label $size={25}><textPath href="#nauryzbai">улица Наурызбай Батыра</textPath></Label>
    <Label $size={27}><textPath href="#timiryazev">ица Тимирязева</textPath></Label>
    <Label $size={22} transform="translate(165 539) rotate(-8)">улица Аксакова</Label>
    <Label $size={24} transform="translate(158 595) rotate(45)">Байтұрсынұлы көшесі</Label>
    <Label $size={22} transform="translate(111 831) rotate(-43)">улица Габдулина</Label>
    <Label $size={22} transform="translate(3 459) rotate(-10)">о</Label>

    <path
      transform="translate(440.4 357.9) scale(4.55)"
      d="M12 2C8.13 2 5 5.13 5 9c0 5.25 7 13 7 13s7-7.75 7-13c0-3.87-3.13-7-7-7zm0 9.5a2.5 2.5 0 0 1 0-5 2.5 2.5 0 0 1 0 5z"
      fill="#f44336"
    />
  </MapFrame>
);

export default function App() {
  return (
    <Screen>
      <GlobalStyle />
      <StatusBar>
        <StatusGroup $gap={4}>
          <StatusText>15:36 | 0,3 КБ/с</StatusText>
          <StatusGroup $gap={7}>
            <AlarmIcon />
            <PlaneIcon />
            <FaceIcon />
          </StatusGroup>
        </StatusGroup>
        <StatusGroup $gap={7}>
          <StatusGroup $gap={13}>
            <SignalIcon />
            <MobileIcon />
            <WifiIcon />
            <BatteryIcon />
          </StatusGroup>
          <StatusText>85<Percent>%</Percent></StatusText>
        </StatusGroup>
      </StatusBar>

      <Page>
        <Title>Тауарды жеткізу</Title>
        <SelectBox>
          <Select aria-label="Тауарды жеткізу" defaultValue="salsat">
            <option value="salsat">SalSat Logistics</option>
          </Select>
          <svg width="27" height="14" viewBox="0 0 27 14" aria-hidden="true"><path d="M0 0h27L13.5 14z" fill="#616161" /></svg>
        </SelectBox>
        <Field>
          <Legend><label htmlFor="address">Мекенжай</label></Legend>
          <Address id="address" rows={3} defaultValue="6WPP+Q2H, 050000 Алматы, Казахстан" />
        </Field>
        <TextButton type="button">Ағымдағы геолокацияны көрсету</TextButton>
        <CityMap />
        <Confirm type="button">Растау</Confirm>
      </Page>

      <NavBar>
        <NavButton type="button" aria-label="Recent apps">
          <svg width="41" height="41" viewBox="0 0 41 41"><rect width="41" height="41" rx="8" fill="#999" /></svg>
        </NavButton>
        <NavButton type="button" aria-label="Home">
          <svg width="56" height="56" viewBox="0 0 56 56">
            <circle cx="28" cy="28" r="25" fill="none" stroke="#999" strokeWidth="5" />
            <circle cx="28" cy="28" r="15" fill="#999" />
          </svg>
        </NavButton>
        <NavButton type="button" aria-label="Back">
          <svg width="38" height="47" viewBox="0 0 38 47"><path d="M35 3v41L3 23.5z" fill="#999" stroke="#999" strokeWidth="5" strokeLinejoin="round" /></svg>
        </NavButton>
      </NavBar>
    </Screen>
  );
}
